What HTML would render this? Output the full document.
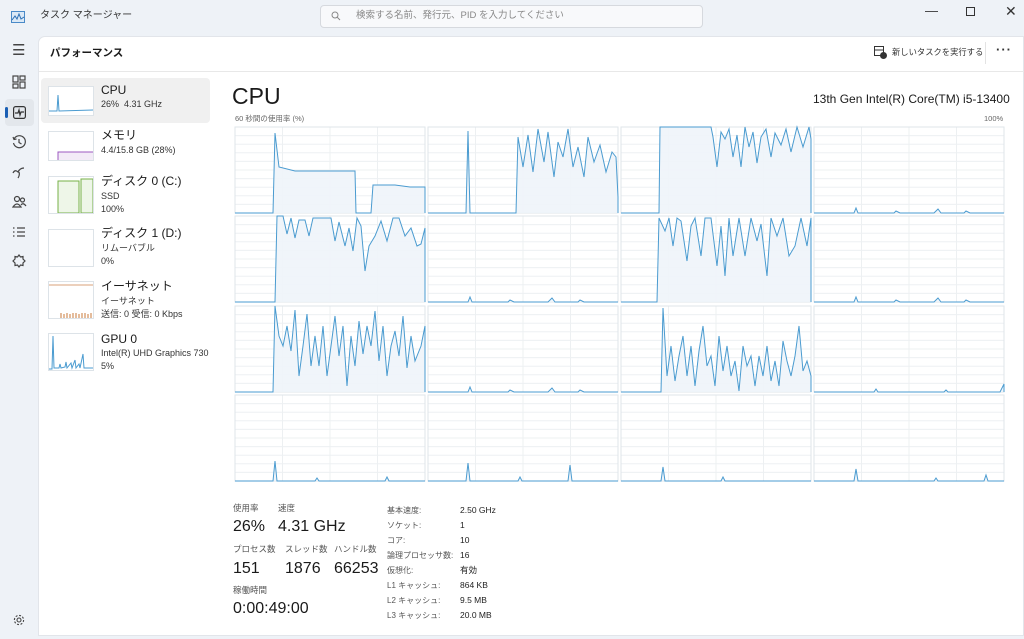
<!DOCTYPE html><html><head><meta charset="utf-8"><style>
*{margin:0;padding:0;box-sizing:border-box}
body{width:1024px;height:639px;overflow:hidden;background:#eef2f7;font-family:"Liberation Sans","Noto Sans CJK JP",sans-serif;color:#1a1a1a;position:relative;line-height:1.15}
.abs{position:absolute}
.panel{left:38px;top:36px;width:986px;height:600px;background:#fff;border:1px solid #e2e5ea;border-radius:7px 0 0 0}
.t{position:absolute;white-space:nowrap}
.thumb{position:absolute;left:48px;width:46px;height:30px;border:1px solid #dde3e8;background:#fff}
.lbl{font-size:9px;color:#555}
.v{font-size:16px}
</style></head><body>
<svg class="abs" style="left:11px;top:11px" width="14" height="12"><rect x="0.5" y="0.5" width="13" height="11" fill="#dbe9f6" stroke="#4a8ac8"/><polyline points="1,9 4,5 6,8 8,3 10,8 13,6" fill="none" stroke="#2b6fb5"/></svg>
<div class="t" style="left:40px;top:10px;font-size:10px;color:#333">タスク マネージャー</div>
<div class="abs" style="left:320px;top:5px;width:383px;height:23px;background:#f8f9fb;border:1px solid #d6d9de;border-radius:4px"></div>
<svg class="abs" style="left:331px;top:11px" width="10" height="10" fill="none" stroke="#888"><circle cx="4" cy="4" r="3"/><line x1="6" y1="6" x2="9" y2="9"/></svg>
<div class="t" style="left:356px;top:11px;font-size:9.5px;color:#888">検索する名前、発行元、PID を入力してください</div>
<div class="t" style="left:925px;top:4px;font-size:13px;color:#333">—</div>
<div class="abs" style="left:966px;top:7px;width:9px;height:9px;border:1px solid #333"></div>
<div class="t" style="left:1005px;top:3px;font-size:14px;color:#333">✕</div>
<!-- rail -->
<div class="t" style="left:12px;top:42px;font-size:15px;color:#444">☰</div>
<svg class="abs" style="left:12px;top:75px" width="14" height="14" fill="none" stroke="#444" stroke-width="1.2"><rect x="1" y="1" width="5" height="6"/><rect x="8" y="1" width="5" height="4"/><rect x="1" y="9" width="5" height="4"/><rect x="8" y="7" width="5" height="6" /></svg>
<div class="abs" style="left:5px;top:99px;width:29px;height:27px;background:#e3e7ec;border-radius:4px"></div>
<div class="abs" style="left:5px;top:107px;width:3px;height:11px;background:#1a5fb4;border-radius:2px"></div>
<svg class="abs" style="left:13px;top:106px" width="13" height="13" fill="none" stroke="#333" stroke-width="1.2"><rect x="0.6" y="0.6" width="11.8" height="11.8" rx="2"/><polyline points="2,7 5,7 6,4 7,9 8,6 11,6"/></svg>
<svg class="abs" style="left:12px;top:135px" width="14" height="14" fill="none" stroke="#444" stroke-width="1.2"><path d="M2,4 A6,6 0 1 1 1.5,8"/><polyline points="1,2 2,4.5 4.5,4"/><polyline points="7,4 7,7.5 9.5,9"/></svg>
<svg class="abs" style="left:12px;top:165px" width="14" height="14" fill="none" stroke="#444" stroke-width="1.2"><path d="M1,8 Q3,4 6,7 Q8,3 12,3 M7,7 Q8,10 6,13"/></svg>
<svg class="abs" style="left:12px;top:195px" width="15" height="14" fill="none" stroke="#444" stroke-width="1.2"><circle cx="5" cy="4" r="2.5"/><circle cx="10.5" cy="5" r="2"/><path d="M1,12 Q5,6 9,12 Z"/><path d="M9,10 Q11,7 14,11"/></svg>
<svg class="abs" style="left:12px;top:226px" width="14" height="12" stroke="#444" stroke-width="1.2"><path d="M1,2H2.5M1,6H2.5M1,10H2.5M5,2H13M5,6H13M5,10H13"/></svg>
<svg class="abs" style="left:12px;top:254px" width="14" height="14" fill="none" stroke="#444" stroke-width="1.2"><path d="M7,1 L8.5,3 11,2.5 11,5 13,7 11,9 11,11.5 8.5,11 7,13 5.5,11 3,11.5 3,9 1,7 3,5 3,2.5 5.5,3Z"/></svg>
<svg class="abs" style="left:13px;top:614px" width="12" height="12" fill="none" stroke="#444" stroke-width="1.1"><circle cx="6" cy="6" r="2"/><circle cx="6" cy="6" r="4.6" stroke-dasharray="2 1.6"/></svg>
<div class="abs panel"></div>
<div class="t" style="left:50px;top:47px;font-size:10.5px;font-weight:bold">パフォーマンス</div>
<svg class="abs" style="left:874px;top:46px" width="13" height="13" fill="none" stroke="#333"><rect x="0.5" y="0.5" width="9" height="9"/><line x1="0.5" y1="4" x2="9" y2="4"/><circle cx="9.5" cy="9.5" r="3" fill="#333"/></svg>
<div class="t" style="left:892px;top:48px;font-size:8.3px;color:#333">新しいタスクを実行する</div>
<div class="abs" style="left:985px;top:42px;width:1px;height:22px;background:#e3e3e3"></div>
<div class="t" style="left:996px;top:43px;font-size:13px;font-weight:bold;color:#333;letter-spacing:1px">···</div>
<div class="abs" style="left:39px;top:71px;width:985px;height:1px;background:#e8e8e8"></div>
<!-- list -->
<div class="abs" style="left:41px;top:78px;width:169px;height:45px;background:#f0f0f0;border-radius:4px"></div>
<div class="thumb" style="top:86px"><svg width="44" height="28"><polyline points="0,24 8,24 9,8 10,24 44,23" fill="none" stroke="#4a9bd0"/></svg></div>
<div class="t" style="left:101px;top:84px;font-size:12px">CPU</div><div class="t lbl" style="left:101px;top:99px;color:#333">26%&nbsp; 4.31 GHz</div>
<div class="thumb" style="top:131px"><svg width="44" height="28"><rect x="9" y="20" width="35" height="8" fill="#f3ebf7"/><polyline points="9,28 9,20 44,20" fill="none" stroke="#9c58c0"/></svg></div>
<div class="t" style="left:101px;top:129px;font-size:12px">メモリ</div><div class="t lbl" style="left:101px;top:145px;color:#333">4.4/15.8 GB (28%)</div>
<div class="thumb" style="top:176px;height:38px"><svg width="44" height="36"><path d="M9,36 V4 H30 V36Z M32,36 V2 H44 V36Z" fill="#eef6e8" stroke="#77b047"/></svg></div>
<div class="t" style="left:101px;top:175px;font-size:12px">ディスク 0 (C:)</div><div class="t lbl" style="left:101px;top:191px;color:#333">SSD</div><div class="t lbl" style="left:101px;top:204px;color:#333">100%</div>
<div class="thumb" style="top:229px;height:38px"></div>
<div class="t" style="left:101px;top:227px;font-size:12px">ディスク 1 (D:)</div><div class="t lbl" style="left:101px;top:243px;color:#333">リムーバブル</div><div class="t lbl" style="left:101px;top:256px;color:#333">0%</div>
<div class="thumb" style="top:281px;height:38px"><svg width="44" height="36"><line x1="0" y1="3" x2="44" y2="3" stroke="#d9a27a"/><path d="M12,36 V31 M15,36V32 M18,36V31 M21,36V32 M24,36V31 M27,36V31 M30,36V32 M33,36V31 M36,36V31 M39,36V32 M42,36V31" stroke="#c87a3a"/></svg></div>
<div class="t" style="left:101px;top:280px;font-size:12px">イーサネット</div><div class="t lbl" style="left:101px;top:296px;color:#333">イーサネット</div><div class="t lbl" style="left:101px;top:309px;color:#333">送信: 0 受信: 0 Kbps</div>
<div class="thumb" style="top:333px;height:38px"><svg width="44" height="36"><polyline points="0,35 3,35 4,2 5,34 10,34 11,30 12,34 16,33 17,28 18,34 22,29 23,34 26,26 27,34 30,30 31,34 34,20 35,34 44,34" fill="none" stroke="#4a9bd0"/></svg></div>
<div class="t" style="left:101px;top:333px;font-size:12px">GPU 0</div><div class="t lbl" style="left:101px;top:348px;color:#333">Intel(R) UHD Graphics 730</div><div class="t lbl" style="left:101px;top:361px;color:#333">5%</div>
<!-- main -->
<div class="t" style="left:232px;top:83px;font-size:23px">CPU</div>
<div class="t" style="left:813px;top:93px;font-size:12px">13th Gen Intel(R) Core(TM) i5-13400</div>
<div class="t" style="left:235px;top:115px;font-size:7.5px;color:#666">60 秒間の使用率 (%)</div>
<div class="t" style="left:984px;top:115px;font-size:7.5px;color:#666">100%</div>
<svg class="abs" style="left:0;top:0" width="1024" height="639">
<defs>
<pattern id="g" width="190" height="86" patternUnits="userSpaceOnUse"><rect width="190" height="86" fill="#fff"/>
<path d="M0,8.6H190M0,17.2H190M0,25.8H190M0,34.4H190M0,43H190M0,51.6H190M0,60.2H190M0,68.8H190M0,77.4H190M47.5,0V86M95,0V86M142.5,0V86" stroke="#ebeef1" stroke-width="1"/></pattern>
<g id="bg"><rect width="190" height="86" fill="url(#g)" stroke="#dfe5ea"/></g>
<g id="low"><polyline points="0,86 40,86 42,81 44,86 80,86 82,84 86,86 120,86 124,82 127,86 150,86 152,84 156,86 190,86" fill="#eef4fa" stroke="#4a9bd0"/></g>
</defs>
<g fill="#eef4fa" fill-opacity=".9" stroke="#4a9bd0" stroke-width="1">
<g transform="translate(235,127)"><use href="#bg"/><polyline points="0,86 38,86 40,6 44,40 60,44 80,44 100,44 120,44 121,86 136,86 138,58 160,58 175,60 190,60 190,86"/></g>
<g transform="translate(428,127)"><use href="#bg"/><polyline points="0,86 38,86 40,4 42,86 88,86 90,10 95,40 100,8 105,45 110,2 116,35 120,5 126,50 130,15 135,30 140,2 145,40 150,20 156,50 160,10 166,35 172,18 178,45 184,25 188,30 190,70 190,86"/></g>
<g transform="translate(621,127)"><use href="#bg"/><polyline points="0,86 38,86 39,0 90,0 92,10 96,40 100,5 104,12 108,2 112,30 116,8 120,40 124,0 128,20 132,5 136,36 140,10 145,2 150,30 154,6 160,18 165,2 170,25 176,0 182,20 188,0 190,12 190,86"/></g>
<g transform="translate(814,127)"><use href="#bg"/><use href="#low"/></g>
<g transform="translate(235,216)"><use href="#bg"/><polyline points="0,86 40,86 42,0 48,0 52,18 56,2 60,22 64,4 70,4 74,20 78,2 96,2 100,25 104,6 110,30 114,12 118,35 122,2 126,10 130,55 134,30 140,20 146,5 152,25 158,2 164,2 170,20 176,12 182,30 186,28 190,12 190,86"/></g>
<g transform="translate(428,216)"><use href="#bg"/><use href="#low"/></g>
<g transform="translate(621,216)"><use href="#bg"/><polyline points="0,86 36,86 38,2 44,15 48,2 52,30 56,2 60,5 66,45 70,10 74,2 80,40 84,2 90,2 96,50 100,10 104,60 108,2 112,40 118,2 124,40 130,2 136,25 140,8 146,60 150,2 156,20 162,2 168,40 174,30 180,2 186,30 190,2 190,86"/></g>
<g transform="translate(814,216)"><use href="#bg"/><use href="#low"/></g>
<g transform="translate(235,306)"><use href="#bg"/><polyline points="0,86 38,86 40,0 44,30 48,40 52,20 56,45 60,4 64,70 68,40 72,8 76,60 80,30 84,60 88,20 92,70 96,40 100,10 104,50 108,20 112,80 116,30 120,60 124,15 128,48 132,20 136,40 140,5 144,55 148,20 152,70 156,40 160,25 164,50 168,10 172,62 176,30 180,55 186,40 190,20 190,86"/></g>
<g transform="translate(428,306)"><use href="#bg"/><use href="#low"/></g>
<g transform="translate(621,306)"><use href="#bg"/><polyline points="0,86 40,86 42,2 46,70 50,40 54,75 58,50 62,30 66,70 70,40 74,80 78,45 82,20 86,60 90,50 94,80 98,30 102,65 106,40 110,70 114,55 118,85 122,40 126,60 130,50 134,80 138,50 142,70 146,40 150,75 154,55 158,80 162,35 166,55 170,70 174,50 178,20 182,65 186,55 190,70 190,86"/></g>
<g transform="translate(814,306)"><use href="#bg"/><polyline points="0,86 60,86 62,83 64,86 130,86 132,84 134,86 186,86 190,78 190,86"/></g>
<g transform="translate(235,395)"><use href="#bg"/><polyline points="0,86 38,86 40,66 42,86 80,86 82,83 84,86 150,86 152,82 154,86 190,86"/></g>
<g transform="translate(428,395)"><use href="#bg"/><polyline points="0,86 38,86 40,68 42,86 90,86 92,82 94,86 140,86 142,70 144,86 190,86"/></g>
<g transform="translate(621,395)"><use href="#bg"/><polyline points="0,86 40,86 42,72 44,86 100,86 102,82 104,86 190,86"/></g>
<g transform="translate(814,395)"><use href="#bg"/><polyline points="0,86 40,86 42,74 44,86 120,86 122,83 124,86 170,86 172,80 174,86 190,86"/></g>
</g></svg>
<!-- stats -->
<div class="t lbl" style="left:233px;top:504px;font-size:8.5px">使用率</div><div class="t lbl" style="left:278px;top:504px;font-size:8.5px">速度</div>
<div class="t v" style="left:233px;top:518px">26%</div><div class="t v" style="left:278px;top:518px">4.31 GHz</div>
<div class="t lbl" style="left:233px;top:545px;font-size:8.5px">プロセス数</div><div class="t lbl" style="left:285px;top:545px;font-size:8.5px">スレッド数</div><div class="t lbl" style="left:334px;top:545px;font-size:8.5px">ハンドル数</div>
<div class="t v" style="left:233px;top:560px">151</div><div class="t v" style="left:285px;top:560px">1876</div><div class="t v" style="left:334px;top:560px">66253</div>
<div class="t lbl" style="left:233px;top:586px;font-size:8.5px">稼働時間</div>
<div class="t v" style="left:233px;top:600px">0:00:49:00</div>
<div class="abs lbl" style="left:387px;top:503px;line-height:15px;font-size:8px">基本速度:<br>ソケット:<br>コア:<br>論理プロセッサ数:<br>仮想化:<br>L1 キャッシュ:<br>L2 キャッシュ:<br>L3 キャッシュ:</div>
<div class="abs" style="left:460px;top:503px;line-height:15px;font-size:8.5px;color:#222">2.50 GHz<br>1<br>10<br>16<br>有効<br>864 KB<br>9.5 MB<br>20.0 MB</div>
</body></html>
